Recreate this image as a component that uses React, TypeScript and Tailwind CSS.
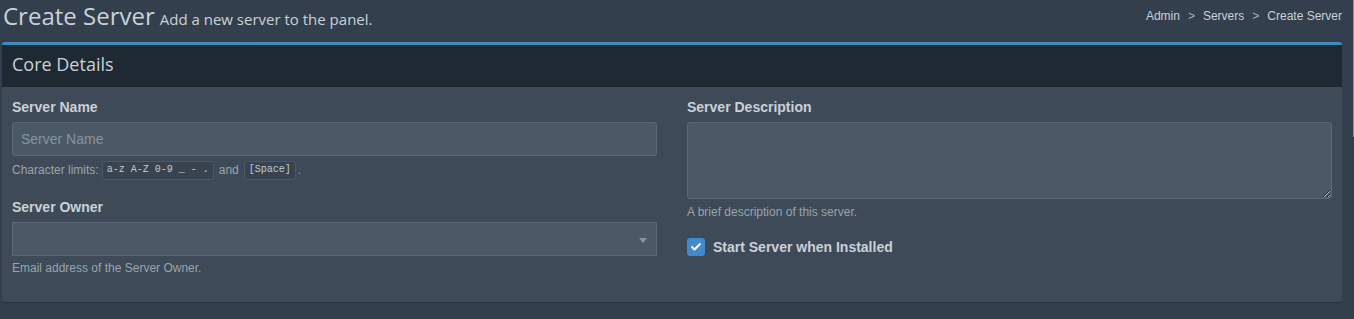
import { Check } from 'lucide-react';

export default function App() {
  return (
    <div className="relative min-h-[319px] bg-[#333f4c] font-['Liberation_Sans',Arial,sans-serif] text-[#cad1d8] overflow-hidden">
      {/* scrollbar sliver */}
      <div className="absolute right-0 top-0 h-[137px] w-[1px] bg-[#8a949e]" />

      {/* Page header */}
      <div className="flex items-start justify-between h-[42px] pl-[3px] pr-[12px]">
        <h1 className="font-['Open_Sans','Noto_Sans',sans-serif] text-[24px] leading-[32px] text-[#cad1d8] whitespace-nowrap">
          Create Server
          <small className="ml-[5px] text-[15px] text-[#cad1d8]">Add a new server to the panel.</small>
        </h1>
        <ol className="flex items-center gap-[8px] text-[12px] leading-[16px] pt-[8px] text-[#cad1d8]">
          <li>Admin</li>
          <li className="text-[#aab3bc]">&gt;</li>
          <li>Servers</li>
          <li className="text-[#aab3bc]">&gt;</li>
          <li>Create Server</li>
        </ol>
      </div>

      {/* Box */}
      <div className="ml-[2px] mr-[12px] border-t-[3px] border-[#3c8dbc] rounded-[3px] bg-[#3e4a57] shadow-[0_1px_1px_rgba(0,0,0,0.2)]">
        <div className="h-[42px] bg-[#1f2933] px-[10px] pb-[4px] flex items-center">
          <h3 className="font-['Open_Sans','Noto_Sans',sans-serif] text-[18px] leading-[20px] text-[#cad1d8]">Core Details</h3>
        </div>
        <div className="px-[10px] pt-[10px] pb-[25px] grid grid-cols-2 gap-[30px]">
          {/* left column */}
          <div className="flex flex-col">
            <label className="text-[14px] font-bold leading-[20px] mb-[5px]">Server Name</label>
            <input
              type="text"
              placeholder="Server Name"
              className="h-[34px] w-full rounded-[3px] border border-[#5c6875] bg-[#4b5866] px-[8px] text-[14px] text-[#cad1d8] placeholder:text-[#8793a0] outline-none"
            />
            <p className="mt-[4px] h-[20px] text-[12px] leading-[18px] text-[#9aa4ae] flex items-center">
              Character limits:
              <code className="ml-[3px] rounded-[3px] border border-[#4c5866] bg-[#38434f] px-[4px] h-[19px] flex items-center font-['Liberation_Mono',monospace] text-[10px] text-[#c3cbd3]">
                a-z A-Z 0-9 _ - .
              </code>
              <span className="ml-[5px]">and</span>
              <code className="ml-[5px] rounded-[3px] border border-[#4c5866] bg-[#38434f] px-[4px] h-[19px] flex items-center font-['Liberation_Mono',monospace] text-[10px] text-[#c3cbd3]">
                [Space]
              </code>
              <span className="ml-[2px]">.</span>
            </p>

            <label className="mt-[17px] text-[14px] font-bold leading-[20px] mb-[5px]">Server Owner</label>
            <div className="relative h-[34px] w-full border border-[#5c6875] bg-[#4b5866]">
              <span className="absolute right-[9px] top-[15px] h-0 w-0 border-x-[4px] border-t-[5px] border-x-transparent border-t-[#8a949e]" />
            </div>
            <p className="mt-[3px] text-[12px] leading-[18px] text-[#9aa4ae]">Email address of the Server Owner.</p>
          </div>

          {/* right column */}
          <div className="flex flex-col">
            <label className="text-[14px] font-bold leading-[20px] mb-[5px]">Server Description</label>
            <textarea className="h-[77px] w-full rounded-[3px] border border-[#5c6875] bg-[#4b5866] px-[8px] py-[6px] text-[14px] text-[#cad1d8] outline-none" />
            <p className="mt-[4px] text-[12px] leading-[18px] text-[#9aa4ae]">A brief description of this server.</p>
            <div className="mt-[16px] flex items-center gap-[8px]">
              <span className="flex h-[18px] w-[18px] items-center justify-center rounded-[3px] bg-[#3f8bce]">
                <Check className="h-[12px] w-[12px] text-white" strokeWidth={4} />
              </span>
              <span className="text-[14px] font-bold leading-[20px]">Start Server when Installed</span>
            </div>
          </div>
        </div>
      </div>
    </div>
  );
}
